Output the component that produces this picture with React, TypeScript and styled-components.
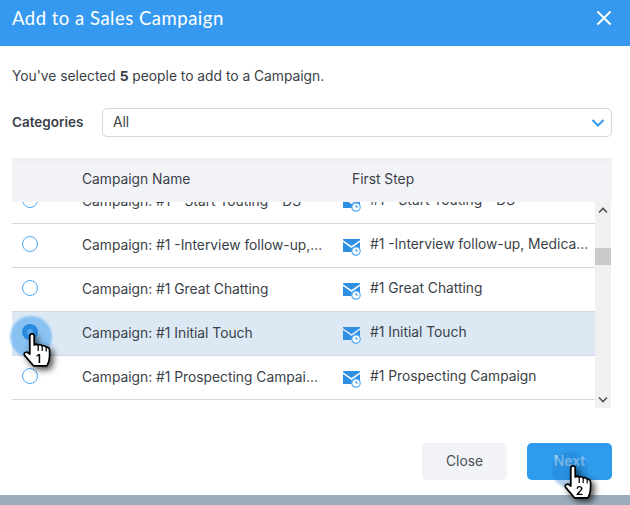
import React from 'react';
import styled, { createGlobalStyle } from 'styled-components';

const GlobalStyle = createGlobalStyle`
  html, body { margin: 0; padding: 0; background: #fff; }
  body { font-family: Inter, "Liberation Sans", sans-serif; color: #3a3f47; }
`;

const Modal = styled.div`
  position: relative;
  width: 630px;
  height: 505px;
  overflow: hidden;
  display: flex;
  flex-direction: column;
`;

const Header = styled.div`
  height: 46px;
  background: #359aef;
  display: flex;
  align-items: center;
  justify-content: space-between;
  padding: 0 18px 11px 12px;
  box-sizing: border-box;
  flex: none;
`;

const Title = styled.div`
  font-family: Lato, sans-serif;
  font-size: 18.5px;
  color: #fff;
  letter-spacing: 0.5px;
`;

const Body = styled.div`
  flex: 1;
  padding: 0 18px 0 12px;
  display: flex;
  flex-direction: column;
`;

const Intro = styled.div`
  margin-top: 22px;
  height: 16px;
  line-height: 16px;
  font-size: 13.8px;
  b { font-weight: 700; }
`;

const FilterRow = styled.div`
  margin-top: 24px;
  display: flex;
  align-items: center;
`;

const FilterLabel = styled.div`
  width: 90px;
  font-size: 13.5px;
  font-weight: 600;
  margin-top: -2px;
`;

const Select = styled.div`
  flex: 1;
  height: 29px;
  box-sizing: border-box;
  border: 1px solid #d4d7e4;
  border-radius: 5px;
  display: flex;
  align-items: center;
  justify-content: space-between;
  padding: 0 5px 2px 10px;
  font-size: 13.8px;
`;

const Table = styled.div`
  margin-top: 21px;
  height: 250px;
  display: flex;
  flex-direction: column;
`;

const TableHead = styled.div`
  height: 44px;
  flex: none;
  display: flex;
  align-items: center;
  background: linear-gradient(#eceef2, #f2f3f7 6px);
  font-size: 13.8px;
  padding-bottom: 2px;
  box-sizing: border-box;
`;

const HeadName = styled.div`
  margin-left: 70px;
  width: 270px;
`;

const TableBody = styled.div`
  flex: 1;
  display: flex;
  min-height: 0;
`;

const RowsClip = styled.div`
  flex: 1;
  overflow: hidden;
`;

const RowsInner = styled.div`
  margin-top: -22px;
`;

const Row = styled.div<{ $selected?: boolean }>`
  height: 44px;
  box-sizing: border-box;
  border-bottom: 1px solid #d5d8e4;
  display: flex;
  align-items: center;
  background: ${(p) => (p.$selected ? '#dce9f5' : 'transparent')};
`;

const RadioCell = styled.div`
  width: 70px;
  flex: none;
  padding-left: 10px;
  box-sizing: border-box;
  display: flex;
  margin-top: -4px;
`;

const Radio = styled.span<{ $checked?: boolean }>`
  width: 16px;
  height: 16px;
  box-sizing: border-box;
  border-radius: 50%;
  background: ${(p) => (p.$checked ? '#7fbdf0' : '#fff')};
  border: ${(p) => (p.$checked ? '5px solid #1d7cd0' : '1.5px solid #4da6f2')};
`;

const NameCell = styled.div`
  width: 243px;
  margin-right: 18px;
  margin-top: -2px;
  flex: none;
  font-size: 13.8px;
  white-space: nowrap;
  overflow: hidden;
  text-overflow: ellipsis;
`;

const StepCell = styled.div`
  flex: 1;
  min-width: 0;
  display: flex;
  align-items: center;
  gap: 9px;
  font-size: 13.8px;
  padding-right: 6px;
`;

const StepText = styled.span`
  white-space: nowrap;
  overflow: hidden;
  text-overflow: ellipsis;
  margin-top: -3px;
`;

const MailIcon = styled.svg`
  flex: none;
  margin-top: 3px;
`;

const Scrollbar = styled.div`
  width: 16px;
  margin-right: 1px;
  flex: none;
  background: #f1f1f1;
  display: flex;
  flex-direction: column;
`;

const ScrollArrow = styled.div`
  height: 17px;
  display: flex;
  align-items: center;
  justify-content: center;
`;

const ScrollTrack = styled.div`
  flex: 1;
  padding-top: 29px;
`;

const ScrollThumb = styled.div`
  height: 17px;
  background: #c9c9c9;
`;

const Footer = styled.div`
  margin-top: 35px;
  display: flex;
  justify-content: flex-end;
  gap: 20px;
`;

const Button = styled.div<{ $primary?: boolean }>`
  width: 85px;
  height: 37px;
  border-radius: 5px;
  display: flex;
  align-items: center;
  justify-content: center;
  padding-bottom: 2px;
  box-sizing: border-box;
  font-size: 13.8px;
  background: ${(p) => (p.$primary ? '#2f9bed' : '#f2f3f7')};
  color: ${(p) => (p.$primary ? '#a5d4f6' : '#4a5058')};
  font-weight: ${(p) => (p.$primary ? 600 : 400)};
`;

const BottomBar = styled.div`
  position: absolute;
  left: 0;
  right: 0;
  bottom: 0;
  height: 10px;
  background: #9aabb9;
`;

const Halo = styled.div<{ $x: number; $y: number; $size: number; $color: string }>`
  position: absolute;
  left: ${(p) => p.$x}px;
  top: ${(p) => p.$y}px;
  width: ${(p) => p.$size}px;
  height: ${(p) => p.$size}px;
  border-radius: 50%;
  background: ${(p) => p.$color};
  filter: blur(1px);
`;

const HandWrap = styled.div<{ $x: number; $y: number }>`
  position: absolute;
  left: ${(p) => p.$x}px;
  top: ${(p) => p.$y}px;
  width: 28px;
  height: 34px;
  filter: drop-shadow(3px 3px 3px rgba(0, 0, 0, 0.7));
`;

const HandNumber = styled.text`
  font-family: Inter, "Liberation Sans", sans-serif;
  font-size: 12px;
  font-weight: 600;
  fill: #000;
`;

const Hand: React.FC<{ x: number; y: number; n: number }> = ({ x, y, n }) => (
  <HandWrap $x={x} $y={y}>
    <svg width="28" height="34" viewBox="0 0 28 34">
      <path
        d="M6.8 3Q6.8 .8 9 .8T11.2 3V12Q13.6 10.4 15.2 12.2Q17.6 10.8 19.2 13Q21.6 12 23.2 14.2Q26.6 14 26.6 18V23Q26.6 28 24 32.8H10.5L1.6 22.4Q.4 20.4 2.4 19.4Q4.6 18.4 6.8 21.2Z"
        fill="#fff"
        stroke="#000"
        strokeWidth="1.7"
        strokeLinejoin="round"
      />
      <path d="M15.2 12.4V18M19.2 13.2V18M23.2 14.4V18.5" stroke="#000" strokeWidth="1.2" fill="none" />
      <HandNumber x="15.5" y="30" textAnchor="middle">{n}</HandNumber>
    </svg>
  </HandWrap>
);

const Mail: React.FC = () => (
  <MailIcon width="18" height="17" viewBox="0 0 18 17">
    <path d="M0 1.2 8.5 7 17 1.2V0H0Z" fill="#2f8fe3" />
    <path d="M0 3 8.5 9 17 3V13H0Z" fill="#2f8fe3" />
    <circle cx="13" cy="12" r="4.2" fill="#fff" stroke="#4da6f2" strokeWidth="1.2" />
    <path d="M13 9.8V12H15" stroke="#2f8fe3" strokeWidth="1" fill="none" />
  </MailIcon>
);

const rows = [
  { name: 'Campaign: #1 - Start Touting - DS', step: '#1 - Start Touting - DS' },
  { name: 'Campaign: #1 -Interview follow-up, Medical', step: '#1 -Interview follow-up, Medical Center' },
  { name: 'Campaign: #1 Great Chatting', step: '#1 Great Chatting' },
  { name: 'Campaign: #1 Initial Touch', step: '#1 Initial Touch', selected: true },
  { name: 'Campaign: #1 Prospecting Campaign - New', step: '#1 Prospecting Campaign' },
  { name: 'Campaign: #1 Referral', step: '#1 Referral' },
];

const App: React.FC = () => (
  <Modal>
    <GlobalStyle />
    <Header>
      <Title>Add to a Sales Campaign</Title>
      <svg width="16" height="16" viewBox="0 0 16 16">
        <path d="M1.5 1.5 14.5 14.5M14.5 1.5 1.5 14.5" stroke="#fff" strokeWidth="2" />
      </svg>
    </Header>
    <Body>
      <Intro>
        You've selected <b>5</b> people to add to a Campaign.
      </Intro>
      <FilterRow>
        <FilterLabel>Categories</FilterLabel>
        <Select>
          All
          <svg width="16" height="16" viewBox="0 0 16 16">
            <path d="M2.5 6 8 11.5 13.5 6" stroke="#359aef" strokeWidth="2" fill="none" />
          </svg>
        </Select>
      </FilterRow>
      <Table>
        <TableHead>
          <HeadName>Campaign Name</HeadName>
          First Step
        </TableHead>
        <TableBody>
          <RowsClip>
            <RowsInner>
              {rows.map((r) => (
                <Row key={r.name} $selected={r.selected}>
                  <RadioCell>
                    <Radio $checked={r.selected} />
                  </RadioCell>
                  <NameCell>{r.name}</NameCell>
                  <StepCell>
                    <Mail />
                    <StepText>{r.step}</StepText>
                  </StepCell>
                </Row>
              ))}
            </RowsInner>
          </RowsClip>
          <Scrollbar>
            <ScrollArrow>
              <svg width="10" height="7" viewBox="0 0 10 7">
                <path d="M1 5.5 5 1.5 9 5.5" stroke="#505050" strokeWidth="1.6" fill="none" />
              </svg>
            </ScrollArrow>
            <ScrollTrack>
              <ScrollThumb />
            </ScrollTrack>
            <ScrollArrow>
              <svg width="10" height="7" viewBox="0 0 10 7">
                <path d="M1 1.5 5 5.5 9 1.5" stroke="#505050" strokeWidth="1.6" fill="none" />
              </svg>
            </ScrollArrow>
          </Scrollbar>
        </TableBody>
      </Table>
      <Footer>
        <Button>Close</Button>
        <Button $primary>Next</Button>
      </Footer>
    </Body>
    <BottomBar />
    <Halo $x={10} $y={316} $size={42} $color="rgba(53, 154, 239, 0.5)" />
    <Hand x={23} y={333} n={1} />
    <Halo $x={552} $y={452} $size={36} $color="rgba(30, 120, 200, 0.35)" />
    <Hand x={564} y={465} n={2} />
  </Modal>
);

export default App;
